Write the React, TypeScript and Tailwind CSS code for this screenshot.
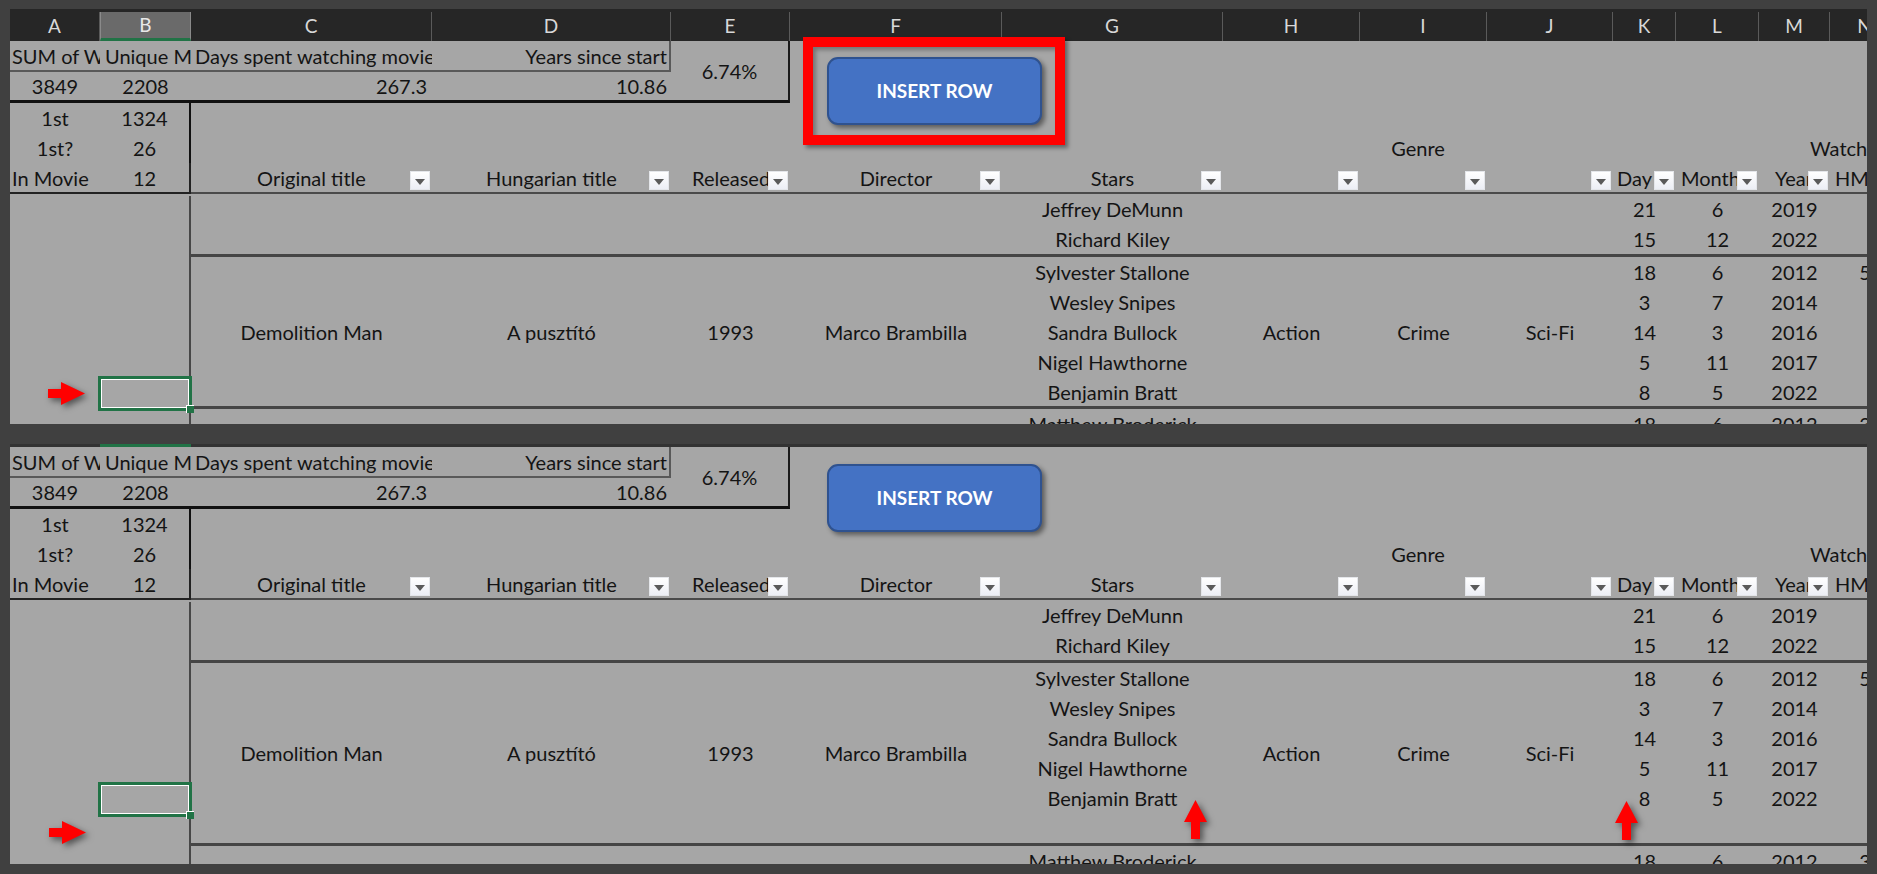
import React from "react";

const COLS = [
  { l: "A", w: 90 }, { l: "B", w: 91 }, { l: "C", w: 241 }, { l: "D", w: 239 }, { l: "E", w: 119 },
  { l: "F", w: 212 }, { l: "G", w: 221 }, { l: "H", w: 137 }, { l: "I", w: 127 }, { l: "J", w: 126 },
  { l: "K", w: 63 }, { l: "L", w: 83 }, { l: "M", w: 71 }, { l: "N", w: 70 },
];
const GRID = "grid grid-cols-[90px_91px_241px_239px_119px_212px_221px_137px_127px_126px_63px_83px_71px_70px]";
const C = "flex items-center justify-center overflow-hidden whitespace-nowrap";
const L = "flex items-center overflow-hidden whitespace-nowrap";

function Filter() {
  return (
    <span className="absolute right-[2px] bottom-[2px] z-[5] flex h-[19px] w-[20px] items-center justify-center border border-[#e4e6ea] bg-linear-to-b from-white to-[#eceef5]">
      <svg width="10" height="6" viewBox="0 0 10 6" className="mt-[2px]">
        <polygon points="0,0 10,0 5,6" fill="#5a5a5a" />
      </svg>
    </span>
  );
}

function RightArrow({ className }: { className: string }) {
  return (
    <svg viewBox="0 0 37 23" className={className}>
      <polygon points="0,7 13,7 13,0 37,11.5 13,23 13,16 0,16" fill="#ff0000" />
    </svg>
  );
}

function UpArrow({ className }: { className: string }) {
  return (
    <svg viewBox="0 0 23 39" className={className}>
      <polygon points="11.5,0 23,22 16,22 16,39 7,39 7,22 0,22" fill="#ff0000" />
    </svg>
  );
}

function Head({ c, pad, filter }: { c?: string; pad?: string; filter?: boolean }) {
  return (
    <div className="relative h-[31px] border-b-2 border-[#4a4a4a]">
      <div className={`flex h-full items-center overflow-hidden whitespace-nowrap ${pad ?? "justify-center"}`}>{c}</div>
      {filter && <Filter />}
    </div>
  );
}

function Row({ star, k, l, m, n, h }: { star: string; k: string; l: string; m: string; n?: string; h: string }) {
  return (
    <div className={`col-span-12 grid grid-cols-subgrid ${h}`}>
      <div className="col-span-4" />
      <div className={C}>{star}</div>
      <div className="col-span-3" />
      <div className={C}>{k}</div>
      <div className={C}>{l}</div>
      <div className={C}>{m}</div>
      <div className={C}>{n}</div>
    </div>
  );
}

const DEMO = [
  ["Sylvester Stallone", "18", "6", "2012", "5"],
  ["Wesley Snipes", "3", "7", "2014"],
  ["Sandra Bullock", "14", "3", "2016"],
  ["Nigel Hawthorne", "5", "11", "2017"],
  ["Benjamin Bratt", "8", "5", "2022"],
];

function Sheet({ full }: { full: boolean }) {
  const tall = full ? "h-[152px]" : "h-[183px]";
  return (
    <div className={`relative w-[1857px] overflow-hidden bg-[#a6a6a6] text-[#141414] text-[20px] ${full ? "h-[415px]" : "h-[420px]"}`}>
      {full ? (
        <div className={`${GRID} h-[32px] bg-[#262626] pt-[3px]`}>
          {COLS.map((c) => (
            <div
              key={c.l}
              className={`flex items-center justify-center overflow-hidden text-[19px] ${
                c.l === "B"
                  ? "border-x border-[#8a8a8a] border-b-[3px] border-b-[#217346] bg-[#6a6a6a] text-[#e8e8e8]"
                  : "border-r border-[#5a5a5a] text-[#d8d8d8]"
              }`}
            >
              {c.l}
            </div>
          ))}
        </div>
      ) : (
        <div className={`${GRID} h-[3px] bg-[#333333]`}>
          {COLS.map((c) => (
            <div key={c.l} className={c.l === "B" ? "bg-[#217346]" : ""} />
          ))}
        </div>
      )}

      <div className={`${GRID} grid-rows-[31px_31px_30px_30px_31px_auto_auto_auto]`}>
        {/* Summary rows */}
        <div className={`${L} border-b-2 border-[#595959] pl-[2px]`}>SUM of Watched</div>
        <div className={`${L} border-b-2 border-[#595959] pl-[5px]`}>Unique Movies</div>
        <div className={`${L} border-b-2 border-[#595959] pl-[4px]`}>Days spent watching movies</div>
        <div className={`${L} justify-end border-b-2 border-r-2 border-[#595959] pr-[2px]`}>Years since start</div>
        <div className={`${C} row-span-2 border-b-[3px] border-r-2 border-[#1a1a1a] border-b-[#111]`}>6.74%</div>
        <div className="relative col-span-9 row-span-2">
          {full && (
            <div className="absolute left-[13px] top-[-4px] z-10 h-[108px] w-[262px] border-[10px] border-[#ff0000] shadow-[3px_3px_4px_rgba(0,0,0,0.4),inset_3px_3px_4px_rgba(0,0,0,0.3)]" />
          )}
          <div
            className={`absolute left-[37px] z-[9] flex h-[68px] w-[215px] items-center justify-center rounded-[11px] border-2 border-[#2f528f] bg-[#4472c4] pt-[1px] text-[19px] font-bold text-white shadow-[3px_3px_5px_rgba(0,0,0,0.45)] ${
              full ? "top-[16px]" : "top-[17px]"
            }`}
          >
            INSERT ROW
          </div>
        </div>

        <div className={`${C} border-b-[3px] border-[#111]`}>3849</div>
        <div className={`${C} border-b-[3px] border-[#111]`}>2208</div>
        <div className={`${L} justify-end border-b-[3px] border-[#111] pr-[5px]`}>267.3</div>
        <div className={`${L} justify-end border-b-[3px] border-[#111] pr-[4px]`}>10.86</div>

        <div className={C}>1st</div>
        <div className={`${C} border-r-2 border-[#111]`}>1324</div>
        <div className="col-span-12" />

        <div className={C}>1st?</div>
        <div className={`${C} border-r-2 border-[#111]`}>26</div>
        <div className="col-span-5" />
        <div className={`${C} col-span-3`}>Genre</div>
        <div className="col-span-2" />
        <div className={`${L} col-span-2 pl-[51px]`}>Watched</div>

        <div className={`${L} border-b-2 border-[#222] pl-[2px]`}>In Movie</div>
        <div className={`${C} border-b-2 border-r-2 border-[#222]`}>12</div>
        <Head c="Original title" filter />
        <Head c="Hungarian title" filter />
        <Head c="Released" pad="pl-[21px]" filter />
        <Head c="Director" filter />
        <Head c="Stars" filter />
        <Head filter />
        <Head filter />
        <Head filter />
        <Head c="Day" pad="pl-[4px]" filter />
        <Head c="Month" pad="pl-[5px]" filter />
        <Head c="Year" pad="pl-[16px]" filter />
        <Head c="HMS" pad="pl-[5px]" />

        {/* Left frozen block */}
        <div className="relative col-span-2 row-span-3 pt-[2px]">
          <div className="ml-auto h-full w-[2px] bg-[#474747]" />
          <div className="absolute left-[88px] top-[182px] z-20 h-[35px] w-[94px] border-[3px] border-[#217346]">
            <div className="h-full w-full border border-white" />
            <span className="absolute right-[-5px] bottom-[-5px] h-[8px] w-[8px] border-l border-t border-white bg-[#217346]" />
          </div>
          <RightArrow
            className={`absolute h-[23px] w-[37px] drop-shadow-[3px_3px_3px_rgba(0,0,0,0.5)] ${
              full ? "left-[38px] top-[188px]" : "left-[39px] top-[221px]"
            }`}
          />
        </div>

        {/* Group 1 */}
        <div className="col-span-12 grid grid-cols-subgrid border-b-[3px] border-[#454545]">
          <Row h="h-[30px]" star="Jeffrey DeMunn" k="21" l="6" m="2019" />
          <Row h="h-[30px]" star="Richard Kiley" k="15" l="12" m="2022" />
        </div>

        {/* Group 2 */}
        <div className={`relative col-span-12 grid grid-cols-subgrid border-b-[3px] border-[#454545] ${tall}`}>
          <div className={C}>Demolition Man</div>
          <div className={C}>A pusztító</div>
          <div className={C}>1993</div>
          <div className={C}>Marco Brambilla</div>
          <div className="flex flex-col">
            {DEMO.map((d) => (
              <div key={d[0]} className={`${C} h-[30px] shrink-0`}>{d[0]}</div>
            ))}
          </div>
          <div className={C}>Action</div>
          <div className={C}>Crime</div>
          <div className={C}>Sci-Fi</div>
          {[1, 2, 3].map((i) => (
            <div key={i} className="flex flex-col">
              {DEMO.map((d) => (
                <div key={d[0]} className={`${C} h-[30px] shrink-0`}>{d[i]}</div>
              ))}
            </div>
          ))}
          <div className="flex flex-col">
            <div className={`${C} h-[30px] shrink-0`}>5</div>
          </div>
          {!full && (
            <>
              <UpArrow className="absolute left-[993px] top-[137px] z-10 h-[39px] w-[23px] drop-shadow-[3px_3px_3px_rgba(0,0,0,0.5)]" />
              <UpArrow className="absolute left-[1424px] top-[138px] z-10 h-[39px] w-[23px] drop-shadow-[3px_3px_3px_rgba(0,0,0,0.5)]" />
            </>
          )}
        </div>

        {/* Group 3 */}
        <div className="col-span-12 grid grid-cols-subgrid">
          <Row h="h-[30px]" star="Matthew Broderick" k="18" l="6" m="2012" n="3" />
        </div>
      </div>
    </div>
  );
}

export default function App() {
  return (
    <div
      className="flex h-[874px] w-[1877px] flex-col gap-[20px] overflow-hidden bg-[#404040] pl-[10px] pt-[9px]"
      style={{ fontFamily: "Lato, 'Open Sans', sans-serif" }}
    >
      <Sheet full />
      <Sheet full={false} />
    </div>
  );
}
